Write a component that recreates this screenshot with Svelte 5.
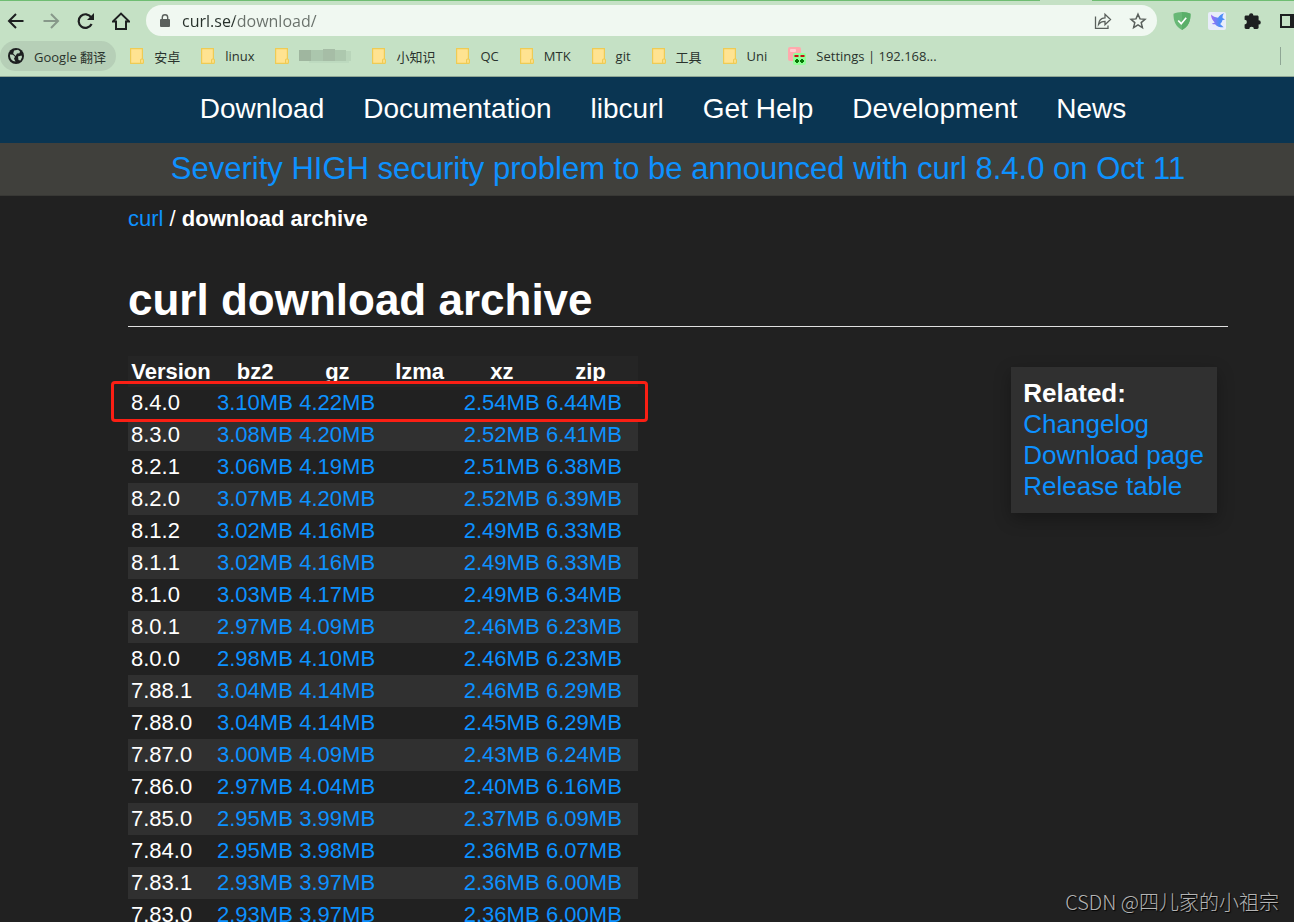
<script>
    let url = 'curl.se/download/';

    const folders = ['安卓', 'linux', '', '小知识', 'QC', 'MTK', 'git', '工具', 'Uni'];
    const menu = ['Download', 'Documentation', 'libcurl', 'Get Help', 'Development', 'News'];
    const formats = ['bz2', 'gz', 'lzma', 'xz', 'zip'];
    const related = ['Changelog', 'Download page', 'Release table'];

    // version, bz2, gz, lzma, xz, zip
    const releases = [
        ['8.4.0', '3.10MB', '4.22MB', '', '2.54MB', '6.44MB'],
        ['8.3.0', '3.08MB', '4.20MB', '', '2.52MB', '6.41MB'],
        ['8.2.1', '3.06MB', '4.19MB', '', '2.51MB', '6.38MB'],
        ['8.2.0', '3.07MB', '4.20MB', '', '2.52MB', '6.39MB'],
        ['8.1.2', '3.02MB', '4.16MB', '', '2.49MB', '6.33MB'],
        ['8.1.1', '3.02MB', '4.16MB', '', '2.49MB', '6.33MB'],
        ['8.1.0', '3.03MB', '4.17MB', '', '2.49MB', '6.34MB'],
        ['8.0.1', '2.97MB', '4.09MB', '', '2.46MB', '6.23MB'],
        ['8.0.0', '2.98MB', '4.10MB', '', '2.46MB', '6.23MB'],
        ['7.88.1', '3.04MB', '4.14MB', '', '2.46MB', '6.29MB'],
        ['7.88.0', '3.04MB', '4.14MB', '', '2.45MB', '6.29MB'],
        ['7.87.0', '3.00MB', '4.09MB', '', '2.43MB', '6.24MB'],
        ['7.86.0', '2.97MB', '4.04MB', '', '2.40MB', '6.16MB'],
        ['7.85.0', '2.95MB', '3.99MB', '', '2.37MB', '6.09MB'],
        ['7.84.0', '2.95MB', '3.98MB', '', '2.36MB', '6.07MB'],
        ['7.83.1', '2.93MB', '3.97MB', '', '2.36MB', '6.00MB'],
        ['7.83.0', '2.93MB', '3.97MB', '', '2.36MB', '6.00MB']
    ];
</script>

<div class="window">
    <div class="tab-edge"><span></span><span></span></div>
    <div class="toolbar">
        <button aria-label="Back">
            <svg width="18" height="18" viewBox="0 0 18 18" fill="none" stroke="#1d1f20" stroke-width="2"><path d="M16.5 9H2.5M9 2L2 9l7 7" /></svg>
        </button>
        <button aria-label="Forward">
            <svg width="18" height="18" viewBox="0 0 18 18" fill="none" stroke="#87988a" stroke-width="2"><path d="M1.5 9h14M9 2l7 7-7 7" /></svg>
        </button>
        <button aria-label="Reload">
            <svg width="18" height="18" viewBox="0 0 18 18"><path d="M14.6 12a6.8 6.8 0 1 1-.4-6.6" fill="none" stroke="#1d1f20" stroke-width="2.2" /><path d="M17 1v7h-7z" fill="#1d1f20" /></svg>
        </button>
        <button aria-label="Home">
            <svg width="18" height="18" viewBox="0 0 18 18" fill="none" stroke="#1d1f20" stroke-width="2"><path d="M1 9.4h3V17h10V9.4h3L9 1.6z" /></svg>
        </button>
        <div class="omnibox">
            <svg width="10" height="13" viewBox="0 0 10 13"><rect y="5" width="10" height="8" rx="1" fill="#5a605c" /><path d="M2.3 5V3.4a2.7 2.7 0 0 1 5.4 0V5" fill="none" stroke="#5a605c" stroke-width="1.4" /></svg>
            <input type="text" aria-label="Address" bind:value={url} />
            <button aria-label="Share">
                <svg width="18" height="18" viewBox="0 0 18 18" fill="none" stroke="#5a605c" stroke-width="1.3"><path d="M1.5 4.5V16.4h12.5V13.5M4.5 12.5c.3-4.5 2.5-6.5 6.5-6.7V2.3l5.500 5.200-5.500 5.200V9.300c-3 0-5 .9-6.500 3.200z" /></svg>
            </button>
            <button aria-label="Bookmark this tab">
                <svg width="18" height="18" viewBox="0 0 18 18" fill="none" stroke="#5a605c" stroke-width="1.5"><path d="M9 2.200l2 4.700 5 .4-3.800 3.300 1.200 5L9 12.900l-4.400 2.700 1.200-5L2 7.300l5-.4z" /></svg>
            </button>
        </div>
        <div class="extensions">
            <button aria-label="AdGuard">
                <svg width="18" height="18" viewBox="0 0 18 18"><path d="M9 0c3 0 6 .7 8.500 1.800C17.700 9 15.500 14.500 9 18 2.500 14.500.3 9 .5 1.800 3 .7 6 0 9 0z" fill="#68b876" /><path d="M9 0c3 0 6 .7 8.500 1.800C17.700 9 15.500 14.500 9 18z" fill="#5aaf69" /><path d="M5.200 8.500l3 3.200 5-6" fill="none" stroke="#fff" stroke-width="1.700" /></svg>
            </button>
            <button aria-label="Bird">
                <svg width="18" height="18" viewBox="0 0 18 18"><defs><linearGradient id="wing" x2="1"><stop offset="0" stop-color="#a46bf5" /><stop offset=".6" stop-color="#4d8df7" /></linearGradient></defs><rect width="18" height="18" rx="2" fill="#e8edfa" /><path d="M3 2.500c2 2 4 2.800 7 3.200 1-1.600 3.500-3.700 6-4.400-1.300 1.600-1.600 3-1.400 4.700L17 7.500l-2.700.8c-.2 1.600-1 2.800-2.200 3.600l3.600 3.400c-3.600.1-6.700-.7-8.700-3.100-1.100.2-2.200 0-3.200-.5l2.900-1.200C4.600 8.500 3 5.800 3 2.500z" fill="url(#wing)" /></svg>
            </button>
            <button aria-label="Extensions">
                <svg width="18" height="18" viewBox="0 0 18 18"><path d="M6 3.500a2.200 2.200 0 0 1 4.400 0h3.800c.8 0 1.400.6 1.400 1.400v3.300a2.200 2.200 0 0 1 0 4.400v3c0 .8-.6 1.400-1.400 1.400h-3.300a2.300 2.300 0 0 0-4.600 0H3c-.8 0-1.400-.6-1.400-1.400v-3.200a2.300 2.300 0 0 0 0-4.600V4.900c0-.8.6-1.400 1.400-1.400z" fill="#1d1f20" /></svg>
            </button>
            <button aria-label="Side panel">
                <svg width="18" height="18" viewBox="0 0 18 18"><rect x="3" y="3" width="14" height="12" fill="none" stroke="#1d1f20" stroke-width="2" /><rect x="12" y="2" width="6" height="14" fill="#1d1f20" /></svg>
            </button>
        </div>
    </div>

    <nav class="bookmarks" aria-label="Bookmarks">
        <a class="translate" href="#translate">
            <svg width="16" height="16" viewBox="0 0 16 16"><circle cx="8" cy="8" r="8" fill="#1d1f20" /><path d="M2 6.500l3 .3 2 2-1 2 1.500 2.700C4 13.500 1.800 10.500 2 6.500zM6 2.500l4-.7 2 1.500-.5 2-2.500.2L7.500 8 5.200 5.500zM10 8.500l3.500-1 .6 1.500-1.600 3.500-2-.5z" fill="#b9d3bb" /></svg>
            Google 翻译
        </a>
        {#each folders as folder}
            <a class="folder" href="#folder">
                <svg width="14" height="16" viewBox="0 0 14 16"><path d="M.6.6h11.800v14.800H.6z" fill="#ffe391" stroke="#eecb55" stroke-width="1.200" /><rect x="10.600" y="11" width="2.800" height="4.400" rx="1" fill="#ffe391" stroke="#eecb55" stroke-width="1.200" /></svg>
                {#if folder}
                    {folder}
                {:else}
                    <svg width="52" height="14" viewBox="0 0 52 14"><path d="M0 1h12v11H0z" fill="#9fb69f" /><path d="M12 1h12v11H12z" fill="#abc6ad" /><path d="M24 0h12v12H24z" fill="#a6bda6" /><path d="M36 1h11v11H36z" fill="#adc8ae" /><path d="M47 2h5v10h-5z" fill="#b9d5ba" /><path d="M10 12h40v2H10z" fill="#bddabf" /></svg>
                {/if}
            </a>
        {/each}
        <a class="folder" href="#settings">
            <svg width="18" height="18" viewBox="0 0 18 18"><rect width="13" height="14" rx="2" fill="#ffa9ad" /><rect x="2" y="2" width="6" height="3" rx="1" fill="#ffd0d2" /><rect x="5" y="6" width="13" height="12" rx="2" fill="#93ff9a" /><path d="M6.500 8h4v2h-4zM12.500 8h4v2h-4z" fill="#c80f0f" /><path d="M8 12h2v1h1v2h-1v1H8v-1H7v-2h1zM13 12h2v1h1v2h-1v1h-2v-1h-1v-2h1z" fill="#067c06" /></svg>
            Settings | 192.168...
        </a>
        <span class="divider"></span>
    </nav>

    <div class="page">
        <nav class="menu">
            {#each menu as item}
                <a href="#{item}">{item}</a>
            {/each}
        </nav>
        <div class="banner">
            <a href="#security">Severity HIGH security problem to be announced with curl 8.4.0 on Oct 11</a>
        </div>
        <main>
            <div class="where"><a href="#curl">curl</a> / <b>download archive</b></div>
            <h1>curl download archive</h1>
            <div class="columns">
                <div class="archive">
                    <table>
                        <thead>
                            <tr>
                                <th class="version">Version</th>
                                {#each formats as format}
                                    <th class:last={format === 'zip'}>{format}</th>
                                {/each}
                            </tr>
                        </thead>
                        <tbody>
                            {#each releases as [version, ...files]}
                                <tr>
                                    <td>{version}</td>
                                    {#each files as size}
                                        <td>{#if size}<a href="#{version}">{size}</a>{/if}</td>
                                    {/each}
                                </tr>
                            {/each}
                        </tbody>
                    </table>
                    <div class="marker"></div>
                </div>
                <aside>
                    <b>Related:</b>
                    {#each related as item}
                        <a href="#related">{item}</a>
                    {/each}
                </aside>
            </div>
        </main>
    </div>
    <div class="watermark">CSDN @四儿家的小祖宗</div>
</div>

<style>
    :global(body) {
        margin: 0;
        background: #212121;
    }

    .window {
        position: relative;
        display: flex;
        flex-direction: column;
        height: 100vh;
        overflow: hidden;
        font-family: "Open Sans", "Noto Sans CJK SC", sans-serif;
    }

    a {
        text-decoration: none;
    }

    button {
        display: flex;
        padding: 0;
        border: 0;
        background: none;
        cursor: pointer;
    }

    svg {
        display: block;
        flex: none;
    }

    /* Browser chrome */
    .tab-edge {
        display: flex;
        flex: none;
        gap: 52px;
        height: 1px;
        background: #c5e1c5;
    }
    .tab-edge span {
        flex: 202;
        background: #6fbd72;
    }
    .tab-edge span:first-child {
        flex: 1039;
    }

    .toolbar {
        display: flex;
        flex: none;
        align-items: center;
        gap: 17px;
        height: 39px;
        padding-left: 7px;
        background: #c5e1c5;
    }

    .omnibox {
        display: flex;
        flex: 1;
        align-items: center;
        box-sizing: border-box;
        gap: 17px;
        height: 31px;
        margin: 0 -1px;
        padding: 0 10px 0 14px;
        border-radius: 16px;
        background: #f0f8f1;
    }
    .omnibox input {
        flex: 1;
        min-width: 0;
        margin-left: -5px;
        padding: 0;
        border: 0;
        outline: none;
        font: 16px/24px "Open Sans", sans-serif;
        /* host part is darker than the path */
        color: transparent;
        caret-color: #222;
        background: linear-gradient(to right, #26302a 53px, #68706a 53px);
        background-clip: text;
        -webkit-background-clip: text;
    }

    .extensions {
        display: flex;
        gap: 17px;
        margin-right: -2px;
    }

    .bookmarks {
        display: flex;
        flex: none;
        align-items: center;
        height: 32px;
        padding-bottom: 4px;
        border-bottom: 1px solid #8fa695;
        background: #c5e1c5;
        font-size: 13px;
        white-space: nowrap;
    }
    .bookmarks a {
        display: flex;
        align-items: center;
        gap: 10px;
        color: #2a332d;
    }
    .bookmarks .translate {
        height: 30px;
        margin-right: 14px;
        padding: 0 10px 0 8px;
        border-radius: 15px;
        background: #b6cfb7;
    }
    .bookmarks .folder {
        margin-right: 21px;
    }
    .divider {
        width: 1px;
        height: 18px;
        margin: 0 13px 0 auto;
        background: #8fa695;
    }

    /* curl site */
    .page {
        flex: 1;
        min-height: 0;
        overflow: hidden;
        background: #212121;
        color: #fff;
        font-family: "Liberation Sans", Arial, sans-serif;
        font-size: 22px;
    }
    .page a {
        color: #0d91ff;
    }

    .menu {
        display: flex;
        justify-content: center;
        gap: 39px;
        height: 66px;
        padding-left: 32px;
        background: #0a3552;
        font-size: 28px;
        line-height: 64px;
    }
    .page .menu a {
        color: #fff;
    }

    .banner {
        padding: 0 66px 0 128px;
        border-bottom: 1px solid #383835;
        background: #40403c;
        font-size: 31px;
        line-height: 52px;
        text-align: center;
        white-space: nowrap;
    }

    main {
        padding: 10px 66px 0 128px;
    }
    .where {
        line-height: 26px;
    }
    h1 {
        margin: 42px 0 0;
        border-bottom: 1px solid #e0e0e0;
        font-size: 44px;
        line-height: 52px;
    }

    .columns {
        display: flex;
        justify-content: space-between;
        align-items: flex-start;
        margin-top: 29px;
    }
    .archive {
        position: relative;
    }
    table {
        width: 510px;
        table-layout: fixed;
        border-collapse: collapse;
    }
    th,
    td {
        height: 32px;
        padding: 0 3px;
        line-height: 32px;
        text-align: left;
        white-space: nowrap;
    }
    th {
        height: 31px;
        line-height: 31px;
        text-align: center;
        background: #252525;
    }
    th.version {
        width: 80px;
    }
    th.last {
        width: 89px;
    }
    tbody tr:nth-child(even) {
        background: #303030;
    }

    /* red frame round the newest release */
    .marker {
        position: absolute;
        top: 25px;
        left: -17px;
        right: -10px;
        box-sizing: border-box;
        height: 41px;
        border: 3px solid #fb1f14;
        border-radius: 4px;
    }

    aside {
        display: flex;
        flex-direction: column;
        margin: 11px 11px 0 0;
        padding: 11px 13px 11px 12px;
        background: #303030;
        box-shadow: 0 6px 16px rgba(0, 0, 0, 0.3);
        font-size: 26px;
        line-height: 31px;
    }

    .watermark {
        position: absolute;
        right: 15px;
        bottom: 5px;
        color: #b4b4b4;
        font-family: "Noto Sans CJK SC", sans-serif;
        font-size: 20px;
        font-weight: 300;
        line-height: 30px;
        text-shadow: 1px 1px 1px #000;
    }
</style>
